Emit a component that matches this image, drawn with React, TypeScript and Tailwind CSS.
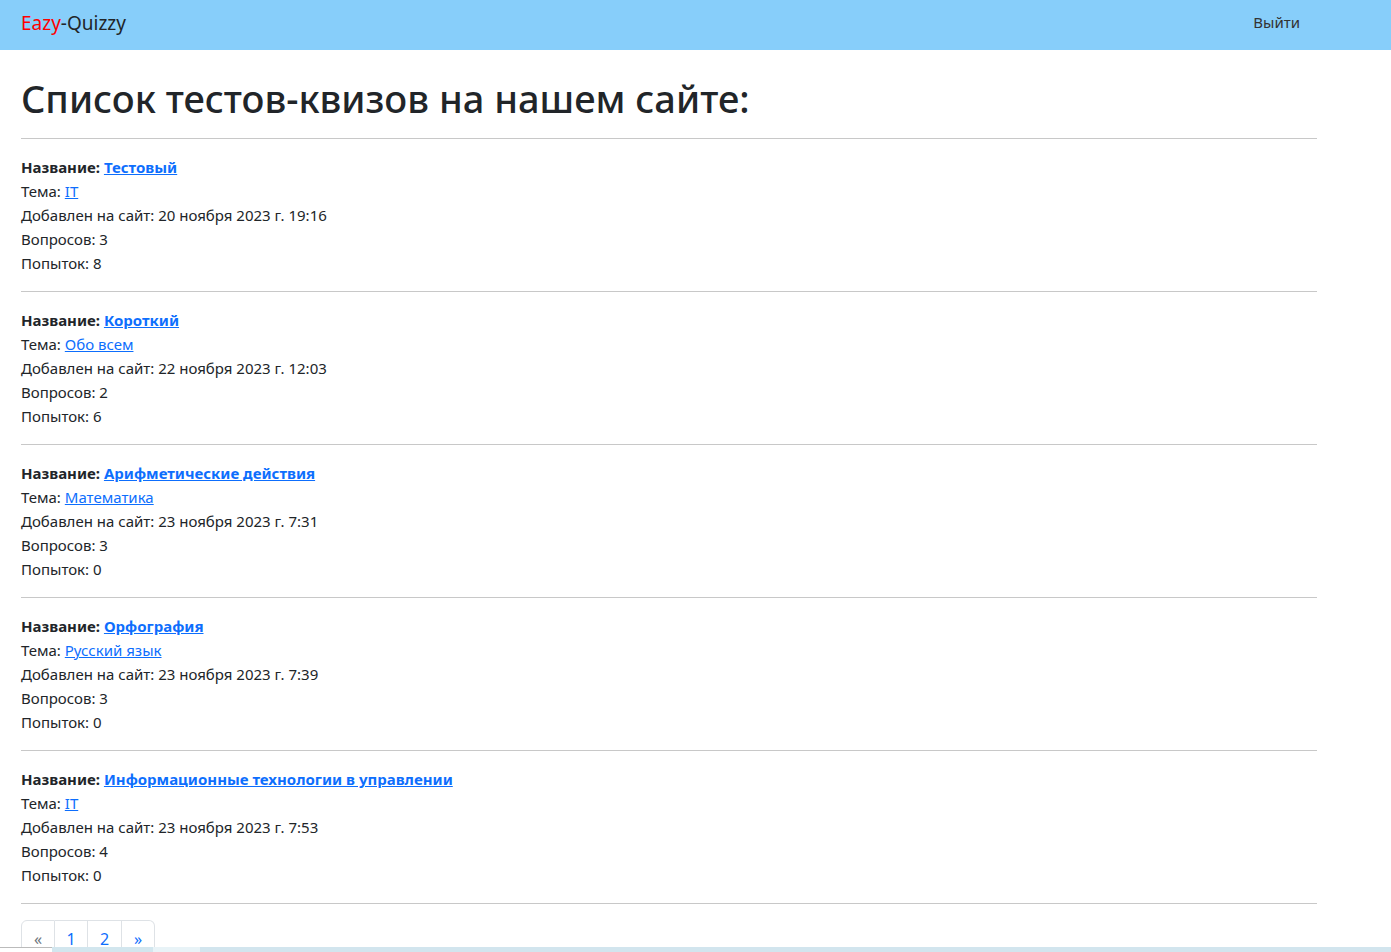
import React from "react";

const quizzes = [
  { name: "Тестовый", topic: "IT", date: "20 ноября 2023 г. 19:16", q: 3, a: 8 },
  { name: "Короткий", topic: "Обо всем", date: "22 ноября 2023 г. 12:03", q: 2, a: 6 },
  { name: "Арифметические действия", topic: "Математика", date: "23 ноября 2023 г. 7:31", q: 3, a: 0 },
  { name: "Орфография", topic: "Русский язык", date: "23 ноября 2023 г. 7:39", q: 3, a: 0 },
  { name: "Информационные технологии в управлении", topic: "IT", date: "23 ноября 2023 г. 7:53", q: 4, a: 0 },
];

export default function App() {
  return (
    <div className="min-h-[952px] bg-white text-[#212529] text-[15px] leading-[24px] font-['Segoe_UI','Noto_Sans',sans-serif]">
      <nav className="h-[50px] bg-[#87cefa] flex items-center justify-between pl-[21px] pr-[91px]">
        <a className="text-[19px] leading-[30px] text-[#212529] mb-[4px]">
          <span className="text-[#ff0000]">Eazy</span>-Quizzy
        </a>
        <a className="text-[15px] text-[#333] mb-[6px]">Выйти</a>
      </nav>
      <main className="w-[1296px] ml-[21px]">
        <h1 className="mt-[24px] text-[38px] leading-[48px] font-medium">Список тестов-квизов на нашем сайте:</h1>
        <hr className="mt-[16px] mb-[16px] border-0 border-t border-[#c8c8c8]" />
        {quizzes.map((q, i) => (
          <div key={i}>
            <div>
              <div>
                <b className="font-bold">Название: </b>
                <a href="#" className="font-bold text-[#0d6efd] underline">{q.name}</a>
              </div>
              <div>
                Тема: <a href="#" className="text-[#0d6efd] underline">{q.topic}</a>
              </div>
              <div>Добавлен на сайт: {q.date}</div>
              <div>Вопросов: {q.q}</div>
              <div>Попыток: {q.a}</div>
            </div>
            <hr className="my-[16px] border-0 border-t border-[#c8c8c8]" />
          </div>
        ))}
        <ul className="flex text-[16px]">
          <li className="border border-[#dee2e6] rounded-l-[6px] py-[6px] text-[#6c757d] w-[34px] text-center">«</li>
          <li className="border border-l-0 border-[#dee2e6] py-[6px] text-[#0d6efd] w-[33px] text-center">1</li>
          <li className="border border-l-0 border-[#dee2e6] py-[6px] text-[#0d6efd] w-[34px] text-center">2</li>
          <li className="border border-l-0 border-[#dee2e6] rounded-r-[6px] py-[6px] text-[#0d6efd] w-[33px] text-center">»</li>
        </ul>
      </main>
      <div className="fixed bottom-0 left-0 right-0 h-[5px] flex">
        <div className="w-[52px] bg-white border-t border-[#bbb]" />
        <div className="w-[101px] bg-[#d2e6ee]" />
        <div className="w-[47px] bg-[#e8f3f7]" />
        <div className="flex-1 bg-[#d2e5ee]" />
      </div>
    </div>
  );
}
